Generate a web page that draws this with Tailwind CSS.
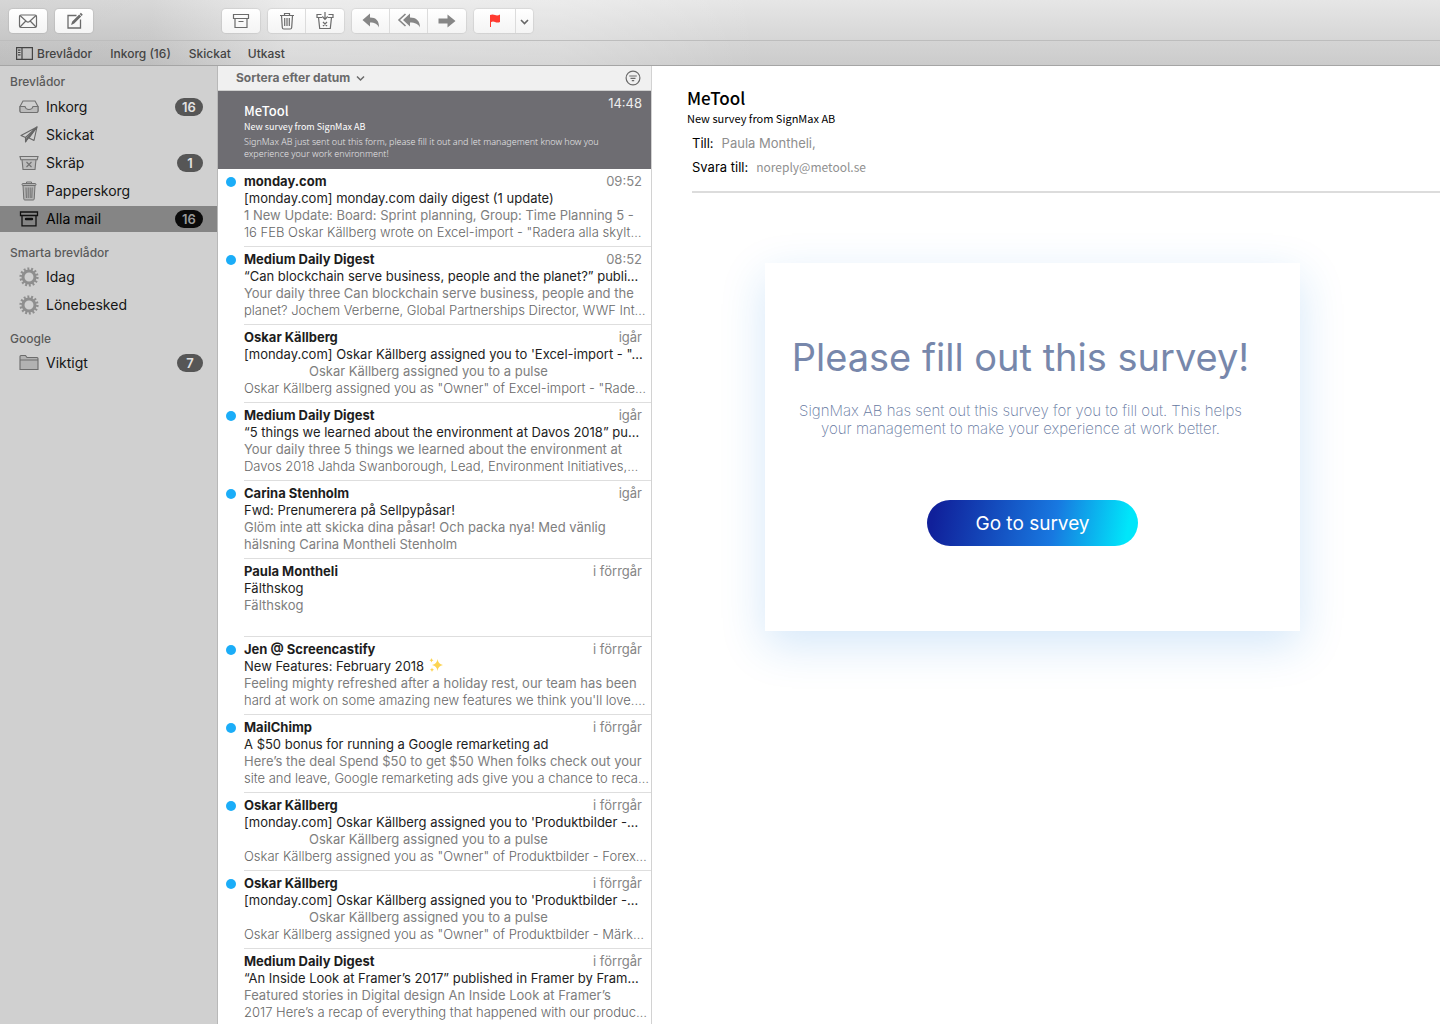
<!DOCTYPE html>
<html lang="sv">
<head>
<meta charset="utf-8">
<title>Mail</title>
<script src="https://cdn.jsdelivr.net/npm/@tailwindcss/browser@4"></script>
</head>
<body class="h-screen overflow-hidden flex flex-col bg-white font-['Inter',sans-serif] text-[13px] leading-[17px] text-[#1d1d1d]">

<svg class="hidden">
  <symbol id="archive" viewBox="0 0 20 20"><path d="M2.500 3.500h15v4h-15zM4 7.500v9h12v-9M7.500 10.500h5" fill="none" stroke="currentColor" stroke-width="1.200"/></symbol>
  <symbol id="gear" viewBox="0 0 20 20"><circle cx="10" cy="10" r="6" fill="none" stroke="currentColor" stroke-width="3"/><circle cx="10" cy="10" r="8.200" fill="none" stroke="currentColor" stroke-width="2.800" stroke-dasharray="1.900 1.780"/></symbol>
</svg>

<header class="shrink-0 bg-[linear-gradient(90deg,#00000012_0,#00000010_150px,#ffffff40_290px,#ffffff38_560px,#ffffff00_760px),linear-gradient(180deg,#e6e6e6_0,#d6d6d6_40px,#d4d4d4_42px,#cbcbcb_66px)]">
  <div class="h-10 flex items-center gap-2 px-[9px] pt-[2px] text-[#6b6b6b]" role="toolbar">
    <button aria-label="Hämta mail" class="w-[38px] h-6 rounded bg-linear-to-b from-white to-[#f4f4f4] shadow-[0_0_1px_1px_#00000012] flex items-center justify-center">
      <svg class="size-5" viewBox="0 0 20 20" fill="none" stroke="currentColor" stroke-width="1.200"><rect x="1.500" y="4" width="17" height="12.500" rx="1.500"/><path d="M2 4.500l6.500 6q1.500 1.200 3 0l6.500-6M2 16l5.800-6M18 16l-5.800-6"/></svg>
    </button>
    <button aria-label="Nytt brev" class="w-[38px] h-6 rounded bg-linear-to-b from-white to-[#f4f4f4] shadow-[0_0_1px_1px_#00000012] flex items-center justify-center">
      <svg class="size-5" viewBox="0 0 20 20"><path d="M12.500 4.500H4v12.500h12.500V8.500" fill="none" stroke="currentColor" stroke-width="1.300"/><path d="M7 14l1.200-3.500 7-7 2 2-7 7zM15.700 3l1.200-1.200 1.900 1.900-1.200 1.200z" fill="currentColor"/></svg>
    </button>
    <button aria-label="Arkivera" class="ml-[121px] w-[38px] h-6 rounded bg-linear-to-b from-white to-[#f4f4f4] shadow-[0_0_1px_1px_#00000012] flex items-center justify-center"><svg class="size-5"><use href="#archive"/></svg></button>
    <div class="flex h-6 rounded bg-linear-to-b from-white to-[#f4f4f4] shadow-[0_0_1px_1px_#00000012] divide-x divide-[#dcdcdc]">
      <button aria-label="Radera" class="w-[38px] flex items-center justify-center">
        <svg class="size-5" viewBox="0 0 20 20" fill="none" stroke="currentColor" stroke-width="1.200"><path d="M3 4.500h14M7.500 4.500V2.500h5v2M4.500 4.500l.8 12q.1 1.500 1.500 1.500h6.400q1.400 0 1.500-1.500l.8-12M7.700 7v8M10 7v8M12.300 7v8"/></svg>
      </button>
      <button aria-label="Skräp" class="w-[38px] flex items-center justify-center">
        <svg class="size-5" viewBox="0 0 20 20" fill="none" stroke="currentColor" stroke-width="1.200"><path d="M6.500 3.500H2v3h5M13.500 3.500H18v3h-5M3.500 6.500l1.200 11h10.600l1.200-11M10 1v7M7.300 5.500L10 8.300l2.700-2.800M8 11l4 4M12 11l-4 4"/></svg>
      </button>
    </div>
    <div class="flex h-6 rounded bg-linear-to-b from-white to-[#f4f4f4] shadow-[0_0_1px_1px_#00000012] divide-x divide-[#dcdcdc] text-[#868686]">
      <button aria-label="Svara" class="w-[38px] flex items-center justify-center">
        <svg class="size-5" viewBox="0 0 20 20" fill="currentColor"><path d="M1.500 9L9 2.500v4c6 0 9 3 9 10-1.500-3.500-4-5-9-5v4z"/></svg>
      </button>
      <button aria-label="Svara alla" class="w-[38px] flex items-center justify-center">
        <svg class="h-5 w-6" viewBox="0 0 24 20"><path d="M6 9l7-6.500v4c6 0 10 3 10 10-1.500-3.500-5-5-10-5v4z" fill="currentColor"/><path d="M8.500 3L2 9l6.500 6" fill="none" stroke="currentColor" stroke-width="1.600"/></svg>
      </button>
      <button aria-label="Vidarebefordra" class="w-[38px] flex items-center justify-center">
        <svg class="size-5" viewBox="0 0 20 20" fill="currentColor"><path d="M1.500 7.500h9V3.500l8 6.500-8 6.500v-4h-9z"/></svg>
      </button>
    </div>
    <div class="flex h-6 rounded bg-linear-to-b from-white to-[#f4f4f4] shadow-[0_0_1px_1px_#00000012] divide-x divide-[#dcdcdc]">
      <button aria-label="Flagga" class="w-[42px] flex items-center justify-center">
        <svg class="size-5" viewBox="0 0 20 20"><path d="M5 4q2.500-1 5 0t5-.500v7.500q-2.500 1-5 0t-4 .300V16H5z" fill="#ff3b30"/></svg>
      </button>
      <button aria-label="Välj flagga" class="w-[17px] flex items-center justify-center">
        <svg class="size-[9px]" viewBox="0 0 9 9" fill="none" stroke="#666" stroke-width="1.600"><path d="M1 3l3.500 3.500L8 3"/></svg>
      </button>
    </div>
  </div>
  <nav class="h-[26px] flex items-center border-y border-t-[#bdbdbd] border-b-[#a5a5a5] pt-px pl-4 text-xs font-medium text-[#444]">
    <a href="#" class="flex items-center gap-1"><svg class="w-[17px] h-[13px]" viewBox="0 0 17 13" fill="none" stroke="currentColor" stroke-width="1.200"><path d="M.6.600h15.800v11.800H.6zM6 .6v11.800M2 3.200h2.500M2 5.500h2.500M2 7.800h2.500"/></svg>Brevlådor</a>
    <a href="#" class="ml-[18px]">Inkorg (16)</a>
    <a href="#" class="ml-[18px]">Skickat</a>
    <a href="#" class="ml-[17px]">Utkast</a>
  </nav>
</header>

<div class="flex-1 min-h-0 flex">
  <aside class="w-[217px] shrink-0 bg-[#d0d0d0] text-sm text-[#151515]">
    <h2 class="h-7 flex items-center pt-[3px] pl-[10px] text-xs font-medium text-[#5a5a5a]">Brevlådor</h2>
    <ul class="flex flex-col gap-[2px]">
      <li><a href="#" class="h-[26px] flex items-center pl-[19px] pr-[14px]">
        <svg class="size-5 text-[#707070]" viewBox="0 0 20 20" fill="#bcbcbc" stroke="currentColor" stroke-width="1.100"><path d="M1 9.500L4 4h12l3 5.500V14q0 1.500-1.500 1.500h-15Q1 15.500 1 14z" fill="#cfcfcf"/><path d="M1 9.500h5q.7 3 4 3t4-3h5V14q0 1.500-1.500 1.500h-15Q1 15.500 1 14z"/></svg>
        <span class="ml-[7px]">Inkorg</span><span class="ml-auto w-7 h-[18px] rounded-full bg-[#565656] text-[#e2e2e2] text-[13px] leading-[18px] font-semibold text-center">16</span></a></li>
      <li><a href="#" class="h-[26px] flex items-center pl-[19px] pr-[14px]">
        <svg class="size-5 text-[#666]" viewBox="0 0 20 20" fill="none" stroke="currentColor" stroke-width="1.100" stroke-linejoin="round"><path d="M18 2L2 10.500l4.500 2zM18 2l-3 13.500-5-2.500zM18 2L6.500 12.500v4.500l2-4.200"/><path d="M18 2L8.300 12.500 6.800 16.500z" fill="#666"/></svg>
        <span class="ml-[7px]">Skickat</span></a></li>
      <li><a href="#" class="h-[26px] flex items-center pl-[19px] pr-[14px]">
        <svg class="size-5 text-[#707070]" viewBox="0 0 20 20" fill="#bcbcbc" stroke="currentColor" stroke-width="1.100"><path d="M3 6.500h14l-1 10H4z"/><path d="M1 3.500h18l-.8 3.200H1.800z" fill="#c8c8c8"/><path d="M7.500 9l5 5M12.500 9l-5 5"/></svg>
        <span class="ml-[7px]">Skräp</span><span class="ml-auto w-[26px] h-[18px] rounded-full bg-[#565656] text-[#e2e2e2] text-[13px] leading-[18px] font-semibold text-center">1</span></a></li>
      <li><a href="#" class="h-[26px] flex items-center pl-[19px] pr-[14px]">
        <svg class="size-5 text-[#707070]" viewBox="0 0 20 20" fill="#b4b4b4" stroke="currentColor" stroke-width="1"><path d="M7.500 2.500V1h5v1.500" fill="none"/><path d="M4 4.500h12l-.8 13.500q-.1 1-1 1H5.800q-.9 0-1-1z"/><rect x="3" y="2.500" width="14" height="2" rx="1"/><path d="M7 6.500l.4 10.500M9.200 6.500V17M11.200 6.500V17M13.200 6.500L12.800 17"/></svg>
        <span class="ml-[7px]">Papperskorg</span></a></li>
      <li><a href="#" aria-current="page" class="h-[26px] flex items-center pl-[19px] pr-[14px] bg-[#858585] text-black">
        <svg class="size-5" viewBox="0 0 20 20" fill="none" stroke="#111" stroke-width="1.300"><path d="M1.500 3h17v3.500h-17zM3 6.500v10.300h14V6.500" /><path d="M7 10h6" stroke-width="2.400" stroke-linecap="round"/></svg>
        <span class="ml-[7px]">Alla mail</span><span class="ml-auto w-7 h-[18px] rounded-full bg-[#0a0a0a] text-[#999] text-[13px] leading-[18px] font-semibold text-center">16</span></a></li>
    </ul>
    <h2 class="mt-2 h-6 flex items-center pt-px pl-[10px] text-xs font-medium text-[#5a5a5a]">Smarta brevlådor</h2>
    <ul class="flex flex-col gap-[2px]">
      <li><a href="#" class="h-[26px] flex items-center pl-[19px]"><svg class="size-5 text-[#8e8e8e]"><use href="#gear"/></svg><span class="ml-[7px]">Idag</span></a></li>
      <li><a href="#" class="h-[26px] flex items-center pl-[19px]"><svg class="size-5 text-[#8e8e8e]"><use href="#gear"/></svg><span class="ml-[7px]">Lönebesked</span></a></li>
    </ul>
    <h2 class="mt-2 h-6 flex items-center pt-px pl-[10px] text-xs font-medium text-[#5a5a5a]">Google</h2>
    <ul>
      <li><a href="#" class="h-[26px] flex items-center pl-[19px] pr-[14px]">
        <svg class="size-5 text-[#6c6c6c]" viewBox="0 0 20 20" fill="#b2b2b2" stroke="currentColor" stroke-width="1.100"><path d="M1 16.500V3.500q0-1 1-1h4.500l1.500 2h10q1 0 1 1v11zM1 7h18"/></svg>
        <span class="ml-[7px]">Viktigt</span><span class="ml-auto w-[26px] h-[18px] rounded-full bg-[#565656] text-[#e2e2e2] text-[13px] leading-[18px] font-semibold text-center">7</span></a></li>
    </ul>
  </aside>

  <section class="w-[435px] shrink-0 border-x border-l-[#b8b8b8] border-r-[#d2d2d2] flex flex-col">
    <div class="h-[25px] shrink-0 flex items-center justify-between bg-[#f0f0f0] border-b border-[#cfcfcf] pl-[18px] pr-[10px] text-[#6a6a6a]">
      <button class="flex items-center gap-[6px] text-xs font-bold">Sortera efter datum <svg class="size-[9px]" viewBox="0 0 9 9" fill="none" stroke="currentColor" stroke-width="1.500"><path d="M1 2.500L4.500 6 8 2.500"/></svg></button>
      <button aria-label="Filtrera"><svg class="size-4" viewBox="0 0 16 16" fill="none" stroke="currentColor" stroke-width="1.200"><circle cx="8" cy="8" r="6.900"/><path d="M4.200 6h7.600M5.500 8.300h5M6.800 10.600h2.400"/></svg></button>
    </div>
    <div id="list" class="flex-1 min-h-0 overflow-y-auto [scrollbar-width:none]">
      <article class="h-[78px] bg-[#6e6d72] text-white pl-[26px] pr-[9px] flex font-['Noto_Sans_CJK_SC',sans-serif] whitespace-nowrap">
        <div class="flex-1 pt-3">
          <h3 class="text-[13px] leading-4 font-medium">MeTool</h3>
          <p class="text-[9px] leading-[15px]">New survey from SignMax AB</p>
          <p class="mt-[2px] text-[9px] leading-3 text-[#e6e6e8] font-light font-['Noto_Sans',sans-serif]">SignMax AB just sent out this form, please fill it out and let management know how you<br>experience your work environment!</p>
        </div>
        <time class="w-0 flex justify-end pt-1 font-['Inter',sans-serif] text-[#ededed]">14:48</time>
      </article>
    </div>
  </section>

  <main class="flex-1 min-w-0 overflow-hidden pt-[22px]">
    <div class="pl-[35px] font-['Noto_Sans_CJK_SC',sans-serif] text-black">
      <h1 class="text-[17px] leading-5 font-medium">MeTool</h1>
      <p class="text-[11px] leading-5">New survey from SignMax AB</p>
    </div>
    <dl class="ml-10 pt-[3px] pb-3 border-b-2 border-[#dcdcdc] leading-6 text-black">
      <div class="flex gap-2"><dt>Till:</dt><dd class="text-[#8e8e8e]">Paula Montheli,</dd></div>
      <div class="flex gap-2"><dt>Svara till:</dt><dd class="text-xs leading-6 text-[#909090] font-['Noto_Sans_CJK_SC',sans-serif]">noreply@metool.se</dd></div>
    </dl>
    <section class="ml-[113px] mt-[70px] w-[535px] h-[368px] bg-white shadow-[0_14px_42px_#1c80e030] pt-[70px] flex flex-col items-center font-['Inter',sans-serif] text-[#7787ab]">
      <h2 class="mr-6 text-[38px] leading-[48px]">Please fill out this survey!</h2>
      <p class="mr-6 mt-[21px] text-[15px] leading-[18px] font-extralight text-center whitespace-nowrap text-[#6577a0]">SignMax AB has sent out this survey for you to fill out. This helps<br>your management to make your experience at work better.</p>
      <button class="mt-[62px] w-[211px] h-[46px] rounded-full bg-[linear-gradient(100deg,#10209a_4%,#1878e0_60%,#00e6fa_94%)] text-white text-[19px]">Go to survey</button>
    </section>
  </main>
</div>

<script>
const mails = [
  [1, 'monday.com', '09:52', '[monday.com] monday.com daily digest (1 update)', '1 New Update: Board: Sprint planning, Group: Time Planning 5 -', '16 FEB Oskar Källberg wrote on Excel-import - "Radera alla skylt…'],
  [1, 'Medium Daily Digest', '08:52', '“Can blockchain serve business, people and the planet?” publi…', 'Your daily three Can blockchain serve business, people and the', 'planet? Jochem Verberne, Global Partnerships Director, WWF Int…'],
  [0, 'Oskar Källberg', 'igår', '[monday.com] Oskar Källberg assigned you to \'Excel-import - "…', '\tOskar Källberg assigned you to a pulse', 'Oskar Källberg assigned you as "Owner" of Excel-import - "Rade…'],
  [1, 'Medium Daily Digest', 'igår', '“5 things we learned about the environment at Davos 2018” pu…', 'Your daily three 5 things we learned about the environment at', 'Davos 2018 Jahda Swanborough, Lead, Environment Initiatives,…'],
  [1, 'Carina Stenholm', 'igår', 'Fwd: Prenumerera på Sellpypåsar!', 'Glöm inte att skicka dina påsar! Och packa nya! Med vänlig', 'hälsning Carina Montheli Stenholm'],
  [0, 'Paula Montheli', 'i förrgår', 'Fälthskog', 'Fälthskog', ''],
  [1, 'Jen @ Screencastify', 'i förrgår', 'New Features: February 2018 <svg class="inline size-4 -mt-1" viewBox="0 0 16 16" fill="#fcd451"><path d="M9.500 2q.5 5 5.500 6-5 1-5.500 6Q9 9 4 8q5-1 5.500-6zM3.500 1q.2 2 2 2.300-1.800.4-2 2.200-.2-1.800-2-2.200Q3.300 3 3.500 1zM4 10.500q.2 2 2 2.300-1.800.4-2 2.200-.2-1.800-2-2.200 1.800-.3 2-2.300z"/></svg>', 'Feeling mighty refreshed after a holiday rest, our team has been', 'hard at work on some amazing new features we think you\'ll love.…'],
  [1, 'MailChimp', 'i förrgår', 'A $50 bonus for running a Google remarketing ad', 'Here’s the deal Spend $50 to get $50 When folks check out your', 'site and leave, Google remarketing ads give you a chance to reca…'],
  [1, 'Oskar Källberg', 'i förrgår', '[monday.com] Oskar Källberg assigned you to \'Produktbilder -…', '\tOskar Källberg assigned you to a pulse', 'Oskar Källberg assigned you as "Owner" of Produktbilder - Forex…'],
  [1, 'Oskar Källberg', 'i förrgår', '[monday.com] Oskar Källberg assigned you to \'Produktbilder -…', '\tOskar Källberg assigned you to a pulse', 'Oskar Källberg assigned you as "Owner" of Produktbilder - Märk…'],
  [0, 'Medium Daily Digest', 'i förrgår', '“An Inside Look at Framer’s 2017” published in Framer by Fram…', 'Featured stories in Digital design An Inside Look at Framer’s', '2017 Here’s a recap of everything that happened with our produc…']
];
document.getElementById('list').insertAdjacentHTML('beforeend', mails.map(([unread, from, when, subject, a, b]) => `
  <article class="h-[78px] flex pl-2 whitespace-nowrap">
    <div class="w-[18px] shrink-0 pt-2">${unread ? '<span class="block size-[10px] rounded-full bg-[#1badf8]" role="img" aria-label="Oläst"></span>' : ''}</div>
    <div class="flex-1 min-w-0 pt-1 pr-[9px] border-b border-[#dedede]">
      <div class="flex justify-between"><h3 class="font-bold">${from}</h3><time class="text-[#858585]">${when}</time></div>
      <p>${subject}</p>
      <p class="text-[#7e7e7e] ${a.startsWith('\t') ? 'pl-[65px]' : ''}">${a.trim()}</p>
      <p class="${b.endsWith('…') ? 'font-light text-[#666]' : 'text-[#7e7e7e]'}">${b}</p>
    </div>
  </article>`).join(''));
</script>
</body>
</html>
